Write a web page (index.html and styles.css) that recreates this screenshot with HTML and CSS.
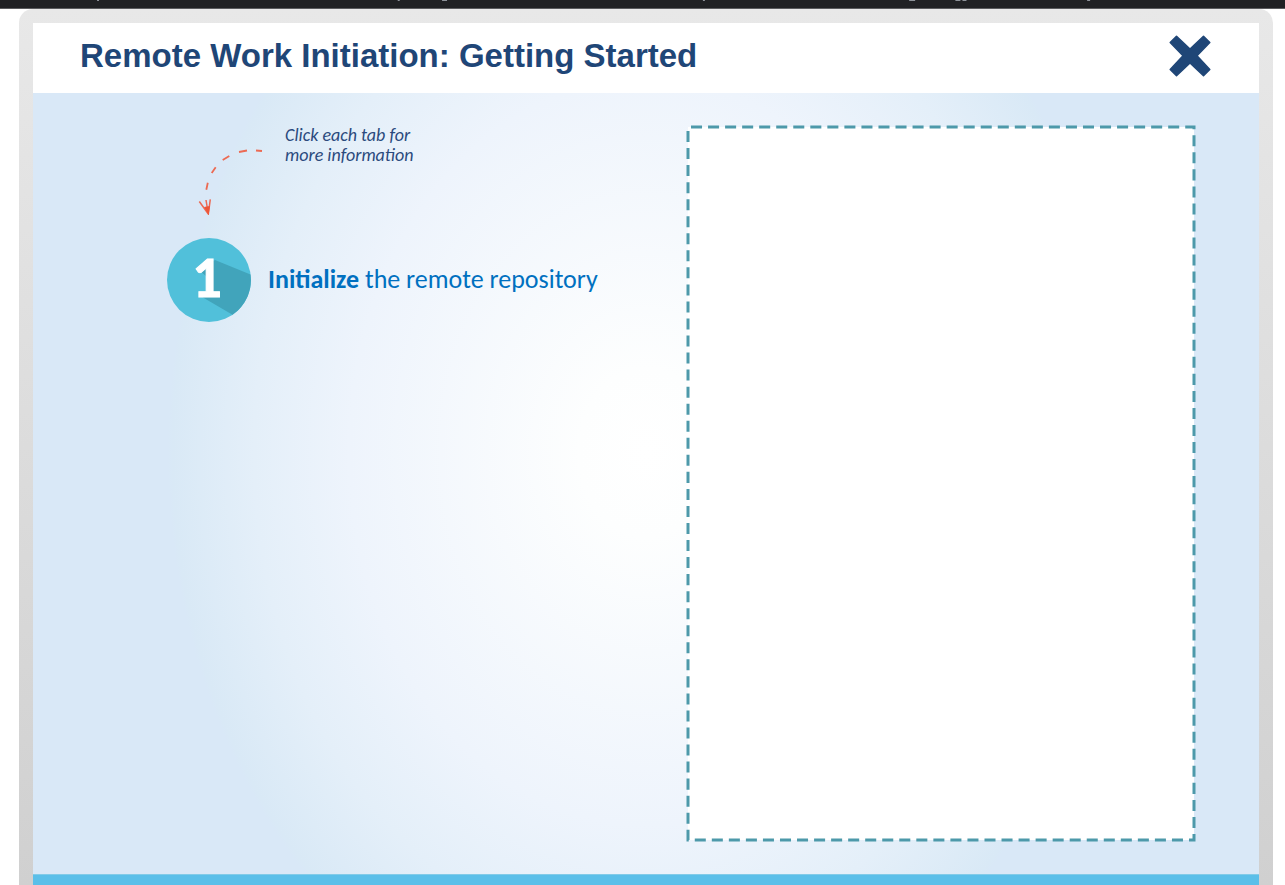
FILE: index.html
```html
<!DOCTYPE html>
<html lang="en">
<head>
<meta charset="utf-8">
<title>Remote Work Initiation: Getting Started</title>
<meta name="viewport" content="width=device-width, initial-scale=1">
<link rel="stylesheet" href="styles.css">
</head>
<body>
<div class="topbar">
  <svg class="topbar-marks" width="100%" height="2" aria-hidden="true">
    <g fill="#8d9299">
      <rect x="7.55%" width="2" height="1"/>
      <rect x="30.95%" width="2" height="1"/>
      <rect x="34.4%" width="5" height="1"/>
      <rect x="54.7%" width="2" height="1"/>
      <rect x="70.75%" width="6" height="1"/>
      <rect x="74.35%" width="5" height="1"/>
      <rect x="74.9%" width="4" height="1"/>
      <rect x="84.6%" width="3" height="1"/>
    </g>
  </svg>
</div>
<main class="frame">
  <header class="header">
    <h1 class="title">Remote Work Initiation: Getting Started</h1>
    <button class="close" type="button" aria-label="Close">
      <svg viewBox="0 0 42 42" width="42" height="42" aria-hidden="true">
        <path d="M7.500 1.200 21 14 34.500 1.200 40.800 7.500 28 20.800 40.800 34.500 34.500 40.800 21 28 7.500 40.800 1.200 34.500 14 20.800 1.200 7.500Z" fill="#1f4677" stroke="#1f4677" stroke-width="1.500" stroke-linejoin="round"/>
      </svg>
    </button>
  </header>
  <section class="stage">
    <div class="steps">
      <div class="hint">
        <svg class="arrow" viewBox="0 0 66 68" width="66" height="68" fill="none" stroke="#ec6a53" stroke-width="1.8" aria-hidden="true">
          <path d="M8.300 42.700 9.800 35.700M13.700 26 17.700 20.300M24.700 13 31.300 9M41 5 49 3.500M58 3.500 64 4"/>
          <path d="M1.300 54.500 10.300 67 12.300 52.300M8 53 10.300 67" stroke-width="1.500"/>
          <path d="M6 60 10.500 68 12 59Z" fill="#ee5638" stroke="none"/>
        </svg>
        <p class="hint-text">Click each tab for<br>more information</p>
      </div>
      <button class="step" type="button">
        <span class="badge">
          <svg class="badge-art" viewBox="0 0 84 84" width="84" height="84" aria-hidden="true">
            <circle cx="42" cy="42" r="42" fill="#51c0da"/>
            <path d="M48 22 83.500 36.500A42 42 0 0 1 65.500 76.800L36 59.500 45 50 45 42 32 33Z" fill="#41a4bb"/>
            <path d="M31 33 39 31V55L31 57Z" fill="#51c0da"/>
            <path d="M33 33 39 31V38Z" fill="#41a4bb"/>
          </svg>
          <span class="badge-number">1</span>
        </span>
        <span class="step-label"><strong>Initialize</strong> the remote repository</span>
      </button>
    </div>
    <div class="panel">
      <svg class="panel-outline" aria-hidden="true">
        <rect width="100%" height="100%" pathLength="2432" fill="none" stroke="#4d99aa" stroke-width="3" stroke-dasharray="11 6" stroke-dashoffset="-3"/>
      </svg>
    </div>
  </section>
  <footer class="footer"></footer>
</main>
</body>
</html>
```

FILE: styles.css
```css
* {
  box-sizing: border-box;
}

body {
  margin: 0;
  min-height: 100vh;
  display: flex;
  flex-direction: column;
  background: #fff;
  font-family: Carlito, Lato, sans-serif;
}

button {
  padding: 0;
  border: 0;
  background: none;
  font: inherit;
  cursor: pointer;
}

.topbar {
  height: 9px;
  background: #202124;
  border-bottom: 1px solid #5a5b5e;
}

.topbar-marks {
  display: block;
}

.frame {
  flex: 1;
  display: flex;
  flex-direction: column;
  margin: 0 12px 0 19px;
  padding: 14px 14px 0;
  border-radius: 14px 14px 0 0;
  background: linear-gradient(#e8e8e8, #d0d0d0);
}

.header {
  display: flex;
  align-items: center;
  justify-content: space-between;
  height: 70px;
  padding: 0 48px 4px 47px;
  background: #fff;
}

.title {
  margin: 0;
  color: #1f4677;
  font: bold 33px/40px "Liberation Sans", sans-serif;
}

.close svg {
  display: block;
}

.stage {
  flex: 1;
  display: grid;
  grid-template-columns: 655fr 506fr;
  padding: 34px 65px 34px 0;
  background: radial-gradient(39% 77% at 50% 46%, #fff 0%, #fdfefe 14%, #eef4fc 62%, #e4eff9 82%, #d9e9f6 99%, #d9e8f7 100%);
}

.steps {
  display: flex;
  flex-direction: column;
  align-items: flex-start;
  gap: 23px;
  padding-left: 134px;
}

.hint {
  display: flex;
  align-items: flex-start;
  gap: 21px;
  padding-left: 31px;
}

.arrow {
  margin-top: 20px;
}

.hint-text {
  margin: -2px 0 0;
  color: #2b4a7d;
  font-size: 18px;
  font-style: italic;
  line-height: 20px;
}

.step {
  display: flex;
  align-items: center;
  gap: 17px;
  color: #0070c0;
  font-size: 26px;
  line-height: 30px;
}

.step-label {
  padding-bottom: 2px;
}

.badge {
  display: grid;
  place-items: center;
}

.badge > * {
  grid-area: 1 / 1;
}

.badge-art {
  display: block;
}

.badge-number {
  z-index: 1;
  padding: 0 4px 4px 0;
  color: #fff;
  font-size: 58px;
  font-weight: 700;
  line-height: 60px;
  -webkit-text-stroke: 1px #fff;
}

.panel {
  background: #fff;
}

.panel-outline {
  display: block;
  width: 100%;
  height: 100%;
  overflow: visible;
}

.footer {
  height: 11px;
  background: #5bbfe9;
  border-top: 1px solid #82cbe8;
}
```
